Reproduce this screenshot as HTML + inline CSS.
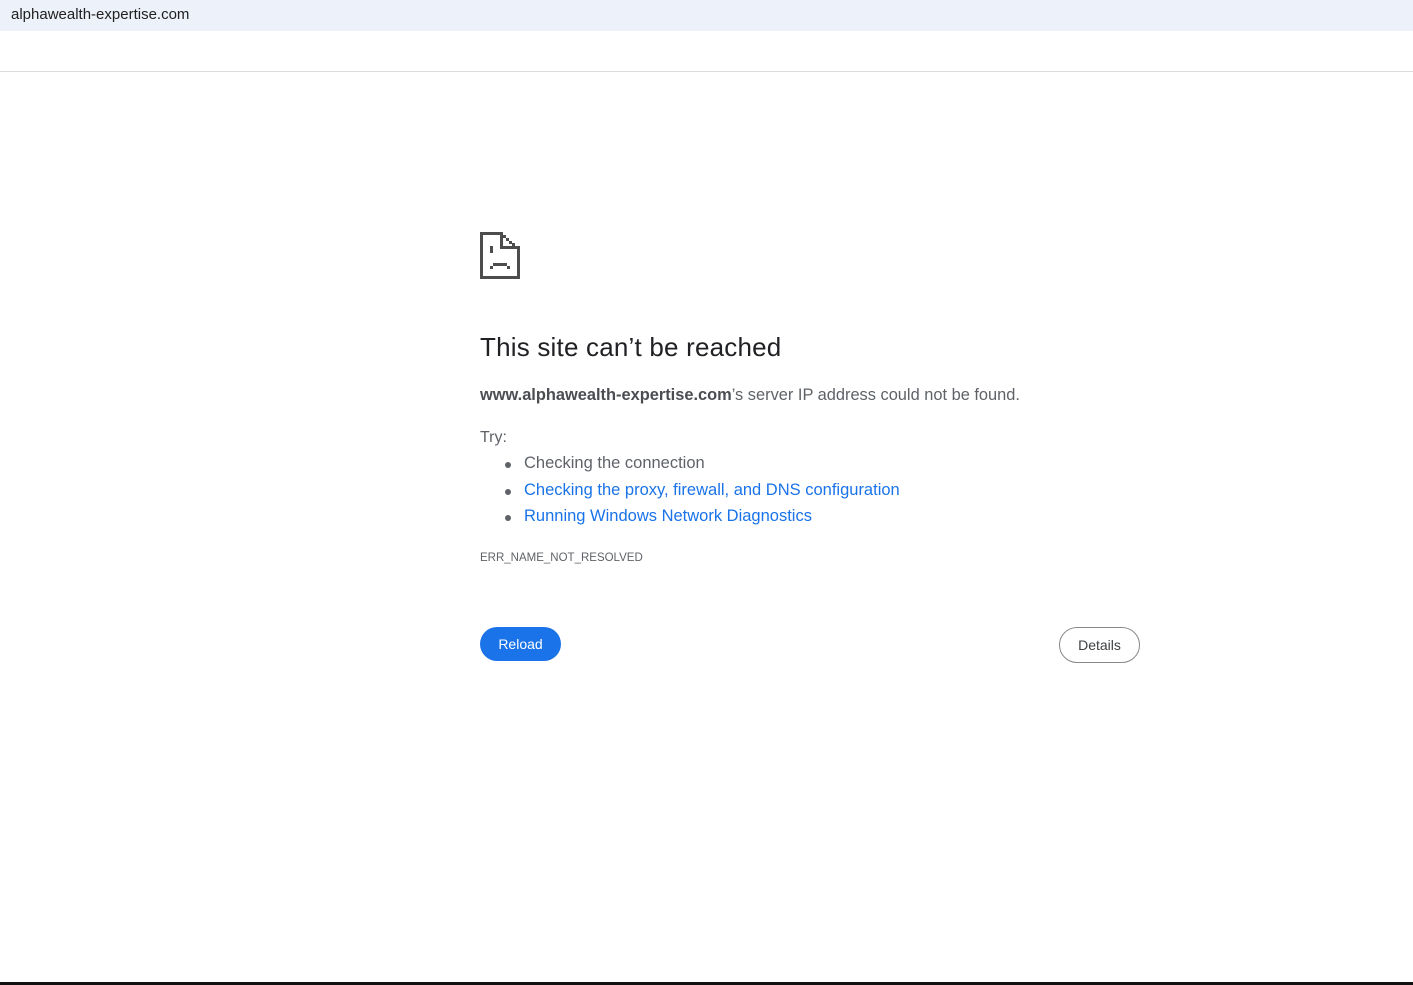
<!DOCTYPE html>
<html><head><meta charset="utf-8"><style>
*{margin:0;padding:0;box-sizing:border-box}
body{width:1413px;height:985px;background:#fff;font-family:"Liberation Sans",sans-serif;position:relative;overflow:hidden;color:#202124}
.bar{position:absolute;left:0;top:0;width:1413px;height:31px;background:#edf1f9;}
.bar span{position:absolute;left:11px;top:6px;font-size:15px;color:#1f1f1f}
.sep{position:absolute;left:0;top:71px;width:1413px;height:1px;background:#dcdcdc}
.bot{position:absolute;left:0;top:982px;width:1413px;height:3px;background:#111}
svg.icon{position:absolute;left:480px;top:232px}
h1{position:absolute;left:480px;top:332px;font-size:26px;font-weight:normal;color:#202124;letter-spacing:0.2px}
.p{position:absolute;left:480px;top:386px;font-size:16.4px;color:#5f6368}
.p b{color:#4a4d52}
.try{position:absolute;left:480px;top:429px;font-size:16px;color:#5f6368}
ul{position:absolute;left:524px;top:454px;list-style:none;font-size:16.5px}
li{height:26.5px;position:relative;color:#5f6368}
li:before{content:"";position:absolute;left:-19px;top:8px;width:6px;height:6px;border-radius:50%;background:#5f6368}
li.a{color:#1a73e8}
.err{position:absolute;left:480px;top:552px;font-size:11.5px;color:#5f6368}
.reload{position:absolute;left:480px;top:627px;width:81px;height:34px;border-radius:17px;background:#1a73e8;color:#fff;font-size:14px;text-align:center;line-height:34px}
.details{position:absolute;left:1059px;top:627px;width:81px;height:36px;border-radius:18px;border:1px solid #888;color:#3c4043;font-size:14px;text-align:center;line-height:34px}
</style></head><body>
<div class="bar"><span>alphawealth-expertise.com</span></div>
<div class="sep"></div>
<svg class="icon" width="40" height="47" viewBox="0 0 40 47" fill="#4d4d4d">
<rect x="0" y="0" width="23" height="3"/>
<rect x="0" y="0" width="3" height="47"/>
<rect x="0" y="44" width="40" height="3"/>
<rect x="37" y="14" width="3" height="33"/>
<rect x="20" y="0" width="3" height="17"/>
<rect x="20" y="14" width="20" height="3"/>
<rect x="23" y="3" width="3" height="3"/>
<rect x="26" y="6" width="3" height="3"/>
<rect x="29" y="9" width="3" height="3"/>
<rect x="32" y="11" width="3" height="3"/>
<rect x="10" y="14" width="3" height="7"/>
<rect x="13" y="31" width="14" height="3"/>
<rect x="10" y="34" width="3" height="3"/>
<rect x="27" y="34" width="3" height="3"/>
</svg>
<h1>This site can’t be reached</h1>
<div class="p"><b>www.alphawealth-expertise.com</b>’s server IP address could not be found.</div>
<div class="try">Try:</div>
<ul>
<li>Checking the connection</li>
<li class="a">Checking the proxy, firewall, and DNS configuration</li>
<li class="a">Running Windows Network Diagnostics</li>
</ul>
<div class="err">ERR_NAME_NOT_RESOLVED</div>
<div class="reload">Reload</div>
<div class="details">Details</div>
<div class="bot"></div>
</body></html>
